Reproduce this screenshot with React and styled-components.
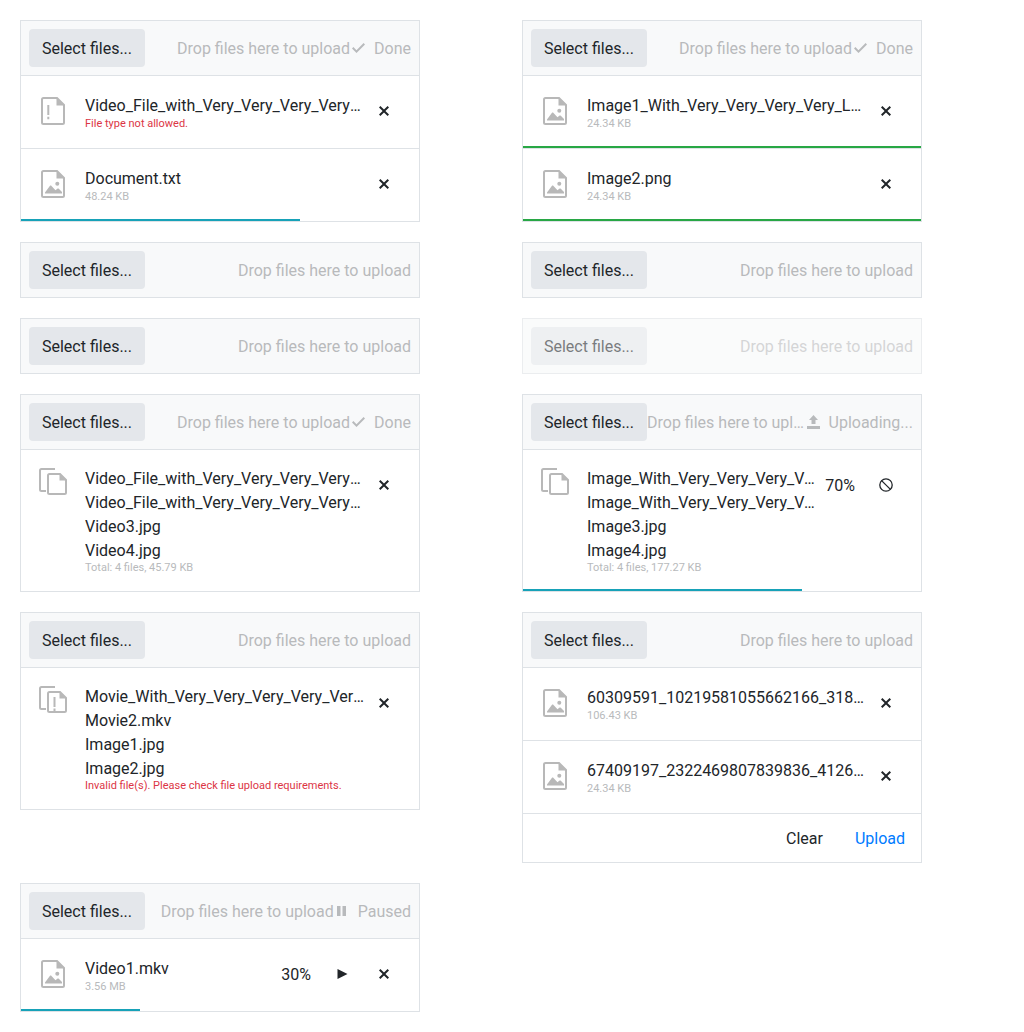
import React from 'react';
import styled, { createGlobalStyle } from 'styled-components';

const Global = createGlobalStyle`
  html, body { margin: 0; padding: 0; background: #fff; }
  body { font-family: Roboto, "Liberation Sans", sans-serif; font-size: 16px; color: #212529; }
`;
const Page = styled.div`
  display: grid;
  grid-template-columns: 400px 400px;
  column-gap: 102px;
  row-gap: 20px;
  align-items: start;
  padding: 20px;
`;
const Card = styled.div`
  border: 1px solid #dee2e6;
  background: #fff;
  opacity: ${p => (p.$disabled ? 0.6 : 1)};
`;
const Toolbar = styled.div`
  display: flex;
  align-items: center;
  height: 54px;
  padding: 0 8px;
  background: #f8f9fa;
`;
const SelectButton = styled.button`
  flex: none;
  width: 116px;
  height: 38px;
  padding: 2px 0 0;
  border: 0;
  border-radius: 4px;
  background: #e4e7eb;
  color: #212529;
  font: 400 16px/24px Roboto, sans-serif;
`;
const Hint = styled.div`
  flex: 1;
  min-width: 0;
  padding-top: 2px;
  text-align: right;
  white-space: nowrap;
  overflow: hidden;
  text-overflow: ellipsis;
  color: #b8babc;
  line-height: 24px;
`;
const Status = styled.div`
  flex: none;
  display: flex;
  align-items: center;
`;
const StatusLabel = styled.span`
  padding-top: 2px;
  color: #b8babc;
  line-height: 24px;
`;
const StatusGlyph = styled.svg`
  width: 16px;
  height: 16px;
  margin-right: 8px;
  fill: #b8babc;
`;
const FileList = styled.ul`
  list-style: none;
  margin: 0;
  padding: 0;
`;
const Row = styled.li`
  position: relative;
  display: flex;
  align-items: flex-start;
  min-height: 72px;
  padding-bottom: ${p => (p.$multi ? '17px' : '0')};
  border-top: 1px solid #dee2e6;
`;
const IconBox = styled.div`
  flex: none;
  width: 64px;
  height: 32px;
  display: flex;
  justify-content: center;
  margin-top: ${p => (p.$multi ? '16px' : '19px')};
`;
const FileGlyph = styled.svg`
  width: 32px;
  height: 32px;
`;
const Info = styled.div`
  flex: 1;
  min-width: 0;
  margin: ${p => (p.$multi ? '17px' : '18px')} -3px 0 0;
`;
const Name = styled.div`
  line-height: 24px;
  white-space: nowrap;
  overflow: hidden;
  text-overflow: ellipsis;
  color: #212529;
`;
const Meta = styled.div`
  font-size: 11px;
  line-height: 13px;
  margin-top: ${p => (p.$multi ? '-2px' : '-1px')};
  color: ${p => (p.$error ? '#dc3545' : '#b8babc')};
  white-space: nowrap;
`;
const Percent = styled.div`
  flex: none;
  margin: 24px 9px 0 13px;
  line-height: 24px;
`;
const Actions = styled.div`
  flex: none;
  display: flex;
  margin: 16px 14px 0 0;
`;
const ActionButton = styled.button`
  width: 43px;
  height: 38px;
  padding: 0;
  border: 0;
  background: transparent;
  display: flex;
  align-items: center;
  justify-content: center;
  & + & { margin-left: -1px; }
`;
const ActionGlyph = styled.svg`
  width: 16px;
  height: 16px;
  fill: #212529;
`;
const Progress = styled.div`
  position: absolute;
  left: 0;
  bottom: 0;
  height: 2px;
  background: ${p => (p.$done ? '#28a745' : '#17a2b8')};
`;
const Footer = styled.div`
  display: flex;
  justify-content: flex-end;
  gap: 32px;
  height: 48px;
  align-items: center;
  padding: 0 16px;
  border-top: 1px solid #dee2e6;
`;
const TextButton = styled.button`
  padding: 2px 0 0;
  border: 0;
  background: transparent;
  font: 400 16px/24px Roboto, sans-serif;
  color: ${p => (p.$primary ? '#007bff' : '#212529')};
`;

const grey = '#b8b8b8';
const FileIcon = ({ kind }) => {
  if (kind === 'multi' || kind === 'multiError') {
    return (
      <FileGlyph viewBox="0 0 32 32">
        <path d="M18 3H4.5C3.5 3 3 3.5 3 4.5V23.5C3 24.5 3.5 25 4.5 25H9" fill="none" stroke={grey} strokeWidth="2" />
        <path d="M12.5 8H23L29 14V26.5C29 27.5 28.5 28 27.5 28H12.5C11.5 28 11 27.5 11 26.5V9.5C11 8.5 11.5 8 12.5 8Z" fill="#fff" stroke={grey} strokeWidth="2" />
        <path d="M22.5 8L29 14.5H22.5Z" fill={grey} />
        {kind === 'multiError' && <path d="M16.5 13H18.5V23H16.5ZM16.5 24.5H18.5V27H16.5Z" fill={grey} />}
      </FileGlyph>
    );
  }
  return (
    <FileGlyph viewBox="0 0 32 32">
      <path d="M6.5 3H20L27 10V27.5C27 28.5 26.5 29 25.5 29H6.5C5.5 29 5 28.5 5 27.5V4.5C5 3.5 5.5 3 6.5 3Z" fill="none" stroke={grey} strokeWidth="2" />
      <path d="M19.5 3L27 10.5H19.5Z" fill={grey} />
      {kind === 'error' && <path d="M10.3 10H12.3V20H10.3ZM10.3 21.7H12.3V24.3H10.3Z" fill={grey} />}
      {kind === 'image' && (
        <>
          <circle cx="20.3" cy="15.7" r="2" fill={grey} />
          <path d="M8 25.5V24.5L12.8 18C13.3 17.4 14 17.4 14.5 18L18.5 22.3L20.3 20.7C20.8 20.3 21.3 20.3 21.8 20.7L25 24V25.5Z" fill={grey} />
        </>
      )}
    </FileGlyph>
  );
};

const XIcon = () => (
  <ActionGlyph viewBox="0 0 16 16">
    <path d="M4.4 3L8 6.6L11.6 3L13 4.4L9.4 8L13 11.6L11.6 13L8 9.4L4.4 13L3 11.6L6.6 8L3 4.4Z" />
  </ActionGlyph>
);
const PlayIcon = () => (
  <ActionGlyph viewBox="0 0 16 16">
    <path d="M3.5 3L13.5 8L3.5 13Z" />
  </ActionGlyph>
);
const CancelIcon = () => (
  <ActionGlyph viewBox="0 0 16 16">
    <circle cx="8" cy="8" r="6.2" fill="none" stroke="#212529" strokeWidth="1.3" />
    <path d="M3.6 3.6L12.4 12.4" fill="none" stroke="#212529" strokeWidth="1.3" />
  </ActionGlyph>
);
const StatusIcon = ({ kind }) => {
  const d = {
    done: 'M2 8.5L3.4 7.1L6.5 10.2L13.6 3L15 4.4L6.5 13Z',
    upload: 'M8.5 1L13 6H10.5V10H6.5V6H4ZM2 12H15V15H2Z',
    paused: 'M3 3H6.5V13H3ZM8.5 3H12V13H8.5Z',
  }[kind];
  return (
    <StatusGlyph viewBox="0 0 16 16">
      <path d={d} />
    </StatusGlyph>
  );
};
const statusText = { done: 'Done', upload: 'Uploading...', paused: 'Paused' };

const FileRow = ({ kind, names, meta, error, percent, actions, bar, done }) => {
  const multi = names.length > 1;
  return (
    <Row $multi={multi}>
      <IconBox $multi={multi}><FileIcon kind={kind} /></IconBox>
      <Info $multi={multi}>
        {names.map(n => <Name key={n}>{n}</Name>)}
        <Meta $multi={multi} $error={error}>{meta}</Meta>
      </Info>
      {percent && <Percent>{percent}</Percent>}
      <Actions>
        {actions.map(a => (
          <ActionButton key={a}>
            {a === 'x' && <XIcon />}
            {a === 'play' && <PlayIcon />}
            {a === 'cancel' && <CancelIcon />}
          </ActionButton>
        ))}
      </Actions>
      {bar && <Progress $done={done} style={{ width: `${bar}%` }} />}
    </Row>
  );
};

const Upload = ({ status, disabled, files, footer }) => (
  <Card $disabled={disabled}>
    <Toolbar>
      <SelectButton>Select files...</SelectButton>
      <Hint>Drop files here to upload</Hint>
      {status && (
        <Status>
          <StatusIcon kind={status} />
          <StatusLabel>{statusText[status]}</StatusLabel>
        </Status>
      )}
    </Toolbar>
    {files && (
      <FileList>
        {files.map(f => <FileRow key={f.names[0]} actions={['x']} {...f} />)}
      </FileList>
    )}
    {footer && (
      <Footer>
        <TextButton>Clear</TextButton>
        <TextButton $primary>Upload</TextButton>
      </Footer>
    )}
  </Card>
);

const longVideo = 'Video_File_with_Very_Very_Very_Very_Long_Name.mp4';
const longVideo2 = 'Video_File_with_Very_Very_Very_Very_Long_Name_2.mp4';
const longImage = 'Image_With_Very_Very_Very_Very_Long_Name.png';
const longImage2 = 'Image_With_Very_Very_Very_Very_Long_Name_2.png';

export default function App() {
  return (
    <Page>
      <Global />
      <Upload status="done" files={[
        { kind: 'error', names: [longVideo], meta: 'File type not allowed.', error: true },
        { kind: 'image', names: ['Document.txt'], meta: '48.24 KB', bar: 70 },
      ]} />
      <Upload status="done" files={[
        { kind: 'image', names: ['Image1_With_Very_Very_Very_Very_Long_Name.png'], meta: '24.34 KB', bar: 100, done: true },
        { kind: 'image', names: ['Image2.png'], meta: '24.34 KB', bar: 100, done: true },
      ]} />
      <Upload />
      <Upload />
      <Upload />
      <Upload disabled />
      <Upload status="done" files={[
        { kind: 'multi', names: [longVideo, longVideo2, 'Video3.jpg', 'Video4.jpg'], meta: 'Total: 4 files, 45.79 KB' },
      ]} />
      <Upload status="upload" files={[
        { kind: 'multi', names: [longImage, longImage2, 'Image3.jpg', 'Image4.jpg'], meta: 'Total: 4 files, 177.27 KB', percent: '70%', actions: ['cancel'], bar: 70 },
      ]} />
      <Upload files={[
        { kind: 'multiError', names: ['Movie_With_Very_Very_Very_Very_Very_Long_Name.mkv', 'Movie2.mkv', 'Image1.jpg', 'Image2.jpg'], meta: 'Invalid file(s). Please check file upload requirements.', error: true },
      ]} />
      <Upload footer files={[
        { kind: 'image', names: ['60309591_10219581055662166_3186123456789012_n.jpg'], meta: '106.43 KB' },
        { kind: 'image', names: ['67409197_2322469807839836_4126123456789012_n.jpg'], meta: '24.34 KB' },
      ]} />
      <Upload status="paused" files={[
        { kind: 'image', names: ['Video1.mkv'], meta: '3.56 MB', percent: '30%', actions: ['play', 'x'], bar: 30 },
      ]} />
    </Page>
  );
}
